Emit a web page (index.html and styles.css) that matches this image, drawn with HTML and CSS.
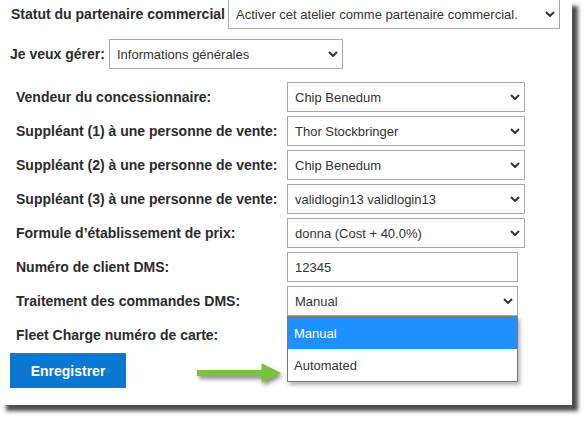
FILE: index.html
```html
<!DOCTYPE html>
<html lang="fr">
<head>
<meta charset="utf-8">
<title>Partenaire commercial</title>
<link rel="stylesheet" href="styles.css">
</head>
<body>
<div class="card">
  <div class="row top1">
    <span class="lbl lbl-statut">Statut du partenaire commercial</span>
    <div class="sel w-statut"><span>Activer cet atelier comme partenaire commercial.</span><svg class="chev" viewBox="0 0 10 6"><path d="M1 1l4 4 4-4"/></svg></div>
  </div>
  <div class="row top2">
    <span class="lbl lbl-gerer">Je veux gérer:</span>
    <div class="sel w-gerer"><span>Informations générales</span><svg class="chev" viewBox="0 0 10 6"><path d="M1 1l4 4 4-4"/></svg></div>
  </div>
  <div class="form">
    <span class="lbl">Vendeur du concessionnaire:</span>
    <div class="sel w-long"><span>Chip Benedum</span><svg class="chev" viewBox="0 0 10 6"><path d="M1 1l4 4 4-4"/></svg></div>
    <span class="lbl">Suppléant (1) à une personne de vente:</span>
    <div class="sel w-long"><span>Thor Stockbringer</span><svg class="chev" viewBox="0 0 10 6"><path d="M1 1l4 4 4-4"/></svg></div>
    <span class="lbl">Suppléant (2) à une personne de vente:</span>
    <div class="sel w-long"><span>Chip Benedum</span><svg class="chev" viewBox="0 0 10 6"><path d="M1 1l4 4 4-4"/></svg></div>
    <span class="lbl">Suppléant (3) à une personne de vente:</span>
    <div class="sel w-long"><span>validlogin13 validlogin13</span><svg class="chev" viewBox="0 0 10 6"><path d="M1 1l4 4 4-4"/></svg></div>
    <span class="lbl">Formule d’établissement de prix:</span>
    <div class="sel w-long"><span>donna (Cost + 40.0%)</span><svg class="chev" viewBox="0 0 10 6"><path d="M1 1l4 4 4-4"/></svg></div>
    <span class="lbl">Numéro de client DMS:</span>
    <div class="sel w-short"><span>12345</span></div>
    <span class="lbl">Traitement des commandes DMS:</span>
    <div class="sel w-short open"><span>Manual</span><svg class="chev" viewBox="0 0 10 6"><path d="M1 1l4 4 4-4"/></svg>
      <ul class="menu">
        <li class="opt active">Manual</li>
        <li class="opt">Automated</li>
      </ul>
    </div>
    <span class="lbl">Fleet Charge numéro de carte:</span>
    <div class="sel w-short"></div>
  </div>
  <div class="actions">
    <button class="btn">Enregistrer</button>
    <svg class="arrow" viewBox="0 0 90 22"><path d="M0 8h66v-7l20 10-20 10v-7H0z"/></svg>
  </div>
</div>
</body>
</html>
```
FILE: styles.css
```css
html {
  margin: 0;
  padding: 0;
  background: #fff;
  overflow: hidden;
}
body {
  margin: 0;
  padding: 0 0 20px 0;
  font-family: "Liberation Sans", Arial, sans-serif;
  color: #333;
}
.card {
  width: 572px;
  height: 405px;
  background: #fff;
  box-shadow: 6px 6px 4px rgba(0, 0, 0, 0.7);
  display: flex;
  flex-direction: column;
}
.row {
  display: flex;
  align-items: center;
}
.top1 {
  margin-top: -1px;
  padding-left: 11px;
}
.top2 {
  margin-top: 10px;
  padding-left: 10px;
}
.lbl {
  font-size: 14px;
  font-weight: bold;
  color: #2b2b2b;
  white-space: nowrap;
}
.lbl-statut { width: 217px; }
.lbl-gerer { width: 99px; }
.sel {
  position: relative;
  box-sizing: border-box;
  height: 30px;
  border: 1px solid #a3a8b8;
  background: #fff;
  display: flex;
  align-items: center;
  padding-left: 7px;
  font-size: 13px;
  color: #333;
  white-space: nowrap;
}
.sel span { flex: 1; }
.chev {
  width: 10px;
  height: 6px;
  margin-right: 4px;
  fill: none;
  stroke: #333;
  stroke-width: 2;
}
.w-statut { width: 332px; }
.w-gerer { width: 234px; }
.w-long { width: 238px; }
.w-short { width: 231px; }
.form {
  margin-top: 13px;
  padding-left: 16px;
  display: grid;
  grid-template-columns: 271px auto;
  row-gap: 4px;
  align-items: center;
  justify-items: start;
}
.menu {
  position: absolute;
  left: -1px;
  top: 29px;
  width: 231px;
  margin: 0;
  padding: 0;
  list-style: none;
  box-sizing: border-box;
  border: 1px solid #7a7a7a;
  background: #fff;
  box-shadow: 2px 3px 4px rgba(0, 0, 0, 0.3);
  z-index: 2;
}
.opt {
  height: 32px;
  line-height: 33px;
  padding-left: 6px;
  font-size: 13px;
  color: #333;
}
.opt.active {
  background: #1e90ff;
  color: #fff;
}
.actions {
  margin-top: 3px;
  padding-left: 10px;
  display: flex;
  align-items: center;
}
.btn {
  width: 116px;
  height: 35px;
  border: 0;
  background: #0a78d0;
  color: #fff;
  font-family: "Liberation Sans", Arial, sans-serif;
  font-size: 14px;
  font-weight: bold;
}
.arrow {
  width: 88px;
  height: 22px;
  margin-left: 71px;
  margin-top: 4px;
  fill: #7bc23c;
  filter: drop-shadow(2px 3px 2px rgba(0, 0, 0, 0.45));
}
```
